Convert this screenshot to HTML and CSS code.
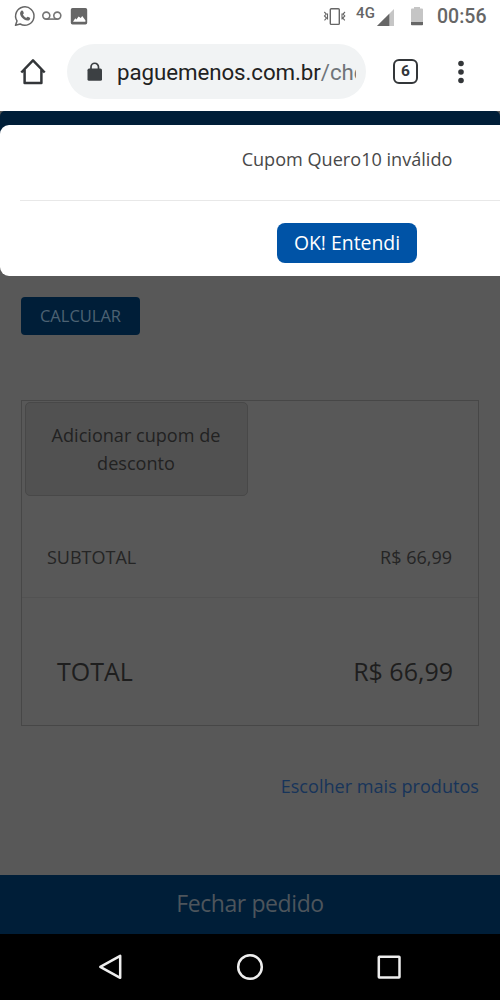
FILE: index.html
```html
<!DOCTYPE html>
<html lang="pt-BR">
<head>
<meta charset="utf-8">
<title>Pague Menos - Carrinho</title>
<link rel="stylesheet" href="styles.css">
</head>
<body>
<div class="phone">
  <header class="status">
    <svg class="status-left" width="90" height="32" viewBox="0 0 90 32">
      <path d="M15.5 25.3 17 20.9A9.2 9.2 0 1 1 20.2 24Z" fill="none" stroke="#666" stroke-width="1.5" stroke-linejoin="round"/>
      <path d="M21.3 10.8c.7-.6 1.3-.5 1.7.3l.8 1.9c.2.5-.7 1.2-.9 1.6.7 1.6 1.9 2.6 3.4 3.3.5-.2 1-1.3 1.5-1.1l2.1 1c.6.3.2 1.5-.4 2.1-1.4 1.2-3.5.7-5.3-.5-2.1-1.4-3.8-3.5-4.1-5.5-.1-1.2.3-2.3 1.200-3.100Z" fill="#666"/>
      <g fill="none" stroke="#757575" stroke-width="1.6"><circle cx="46.300" cy="15.600" r="3.500"/><circle cx="57.300" cy="15.600" r="3.500"/><path d="M46.300 19.100h11"/></g>
      <path fill-rule="evenodd" d="M72.500 8h13a1.700 1.700 0 0 1 1.700 1.700v13a1.700 1.700 0 0 1-1.700 1.700h-13a1.700 1.700 0 0 1-1.700-1.700v-13A1.700 1.700 0 0 1 72.500 8ZM73 21.800h12.400v-1.600l-3.200-4.200-1.400 2.100-2.200-1.700-2.200 3.100-1.100-1.200Z" fill="#666"/>
    </svg>
    <div class="status-right">
      <svg class="vibrate" width="24" height="20" viewBox="0 0 24 20"><g fill="none" stroke="#666"><rect x="7.300" y="1.800" width="9" height="15.600" rx="1" stroke-width="1.400"/><path d="M1.300 5 3.300 7 1.500 9l2 2-2 2.300M4.500 6.500v6M22 5l-2 2 1.800 2-2 2 2 2.300M19 6.500v6" stroke-width="1.100"/></g></svg>
      <span class="network">4G</span>
      <svg class="signal" width="18" height="18" viewBox="0 0 18 18"><path d="M17 0V17H0Z" fill="#c6c6c6"/><path d="M12.300 4.700V17H0Z" fill="#666"/></svg>
      <svg class="battery" width="12" height="20" viewBox="0 0 12 20"><path d="M3 0h6v1.500H11q1 0 1 1v12.500H0V2.500q0-1 1-1h2Z" fill="#c5c5c5"/><path d="M0 15h12v2.500q0 .8-.8.8H.8q-.8 0-.8-.8Z" fill="#666"/></svg>
      <span class="clock">00:56</span>
    </div>
  </header>
  <nav class="browser">
    <svg class="home" width="26" height="28" viewBox="0 0 26 28"><path d="M1.300 14.500 13 2.400l11.700 12.100M4.600 11.600V25H21.400V11.600" fill="none" stroke="#333639" stroke-width="2.500" stroke-linejoin="round"/></svg>
    <div class="address">
      <svg class="lock" width="16" height="20" viewBox="0 0 16 20"><rect x=".5" y="6.600" width="14.500" height="12.200" rx="1.600" fill="#3c4043"/><path d="M4 7V5a3.750 3.750 0 0 1 7.500 0v2" fill="none" stroke="#3c4043" stroke-width="1.700"/></svg>
      <span class="url">paguemenos.com.br<span class="path">/che</span></span>
    </div>
    <span class="tabs">6</span>
    <svg class="more" width="8" height="24" viewBox="0 0 8 24"><g fill="#333639"><circle cx="4" cy="3.500" r="2.800"/><circle cx="4" cy="12" r="2.800"/><circle cx="4" cy="20.500" r="2.800"/></g></svg>
  </nav>
  <main class="page">
    <div class="site-bar"></div>
    <div class="content">
      <button class="calc">CALCULAR</button>
      <section class="summary">
        <button class="coupon">Adicionar cupom de desconto</button>
        <div class="row subtotal"><span class="sub-label">SUBTOTAL</span><span class="sub-value">R$ 66,99</span></div>
        <div class="row total"><span class="total-label">TOTAL</span><span class="total-value">R$ 66,99</span></div>
      </section>
      <div class="more-row"><a class="more-link">Escolher mais produtos</a></div>
    </div>
    <button class="checkout"><span class="checkout-text">Fechar pedido</span></button>
    <div class="modal">
      <p class="message"><span class="message-text">Cupom Quero10 inválido</span></p>
      <div class="actions"><button class="ok">OK! Entendi</button></div>
    </div>
  </main>
  <footer class="system">
    <svg width="26" height="28" viewBox="0 0 26 28"><path d="M22.200 2.800v22L2.300 13.800Z" fill="none" stroke="#eee" stroke-width="2.500" stroke-linejoin="round"/></svg>
    <svg width="28" height="28" viewBox="0 0 28 28"><circle cx="14" cy="14" r="11.800" fill="none" stroke="#eee" stroke-width="2.500"/></svg>
    <svg width="26" height="26" viewBox="0 0 26 26"><rect x="2.800" y="2.800" width="20.700" height="20.700" rx=".5" fill="none" stroke="#eee" stroke-width="2.500"/></svg>
  </footer>
</div>
</body>
</html>
```
FILE: styles.css
```css
* { box-sizing: border-box; }
body { margin: 0; font-family: "Open Sans", "Noto Sans", sans-serif; }
button { border: 0; padding: 0; font-family: inherit; }
svg { display: block; flex: none; }
span, a { white-space: nowrap; }
.phone { width: 500px; height: 1000px; overflow: hidden; display: flex; flex-direction: column; background: #fff; }
.status { height: 32px; display: flex; justify-content: space-between; font-family: Roboto, sans-serif; color: #666; }
.status-right { display: flex; padding-right: 13px; }
.vibrate { margin-top: 7px; }
.network { font-size: 15px; line-height: 17px; font-weight: 500; margin: 5px 0 0 9px; width: 20px; letter-spacing: .2px; }
.signal { margin: 9px 0 0 1px; }
.battery { margin: 7px 0 0 16px; }
.clock { font-size: 19.5px; line-height: 24px; font-weight: 500; margin: 5px 0 0 14px; width: 50px; }
.browser { height: 79px; display: flex; align-items: center; font-family: Roboto, sans-serif; }
.home { margin-left: 20px; }
.address { width: 299px; height: 55px; margin-left: 21px; border-radius: 28px; background: #f1f3f4; display: flex; align-items: center; padding-left: 20px; }
.url { margin-left: 14px; width: 239px; overflow: hidden; font-size: 22.3px; letter-spacing: -.07px; line-height: 32px; color: #222; }
.path { color: #70757a; }
.tabs { width: 25px; height: 25px; margin-left: 27px; border: 2.5px solid #333639; border-radius: 6px; font-size: 15.5px; line-height: 21px; font-weight: 700; text-align: center; color: #333639; }
.more { margin-left: 39px; }
.page { position: relative; overflow: hidden; height: 823px; display: flex; flex-direction: column; background: #585858; }
.site-bar { height: 30px; background: #001e38; border-radius: 5px 5px 0 0; }
.content { height: 734px; padding: 156px 21px 0; }
.calc { display: block; width: 119px; height: 38px; border-radius: 4px; background: #001e38; color: #4d6273; font-size: 16.5px; line-height: 38px; }
.summary { width: 458px; height: 326px; margin-top: 65px; border: 1px solid #474747; padding: 1px 0 0 3px; }
.coupon { display: block; width: 223px; height: 94px; border: 1px solid #484848; border-radius: 5px; background: #515151; color: #222; font-size: 18.1px; line-height: 28px; padding: 0 21px 0 20px; }
.row { display: flex; justify-content: space-between; align-items: center; margin-left: -3px; padding-right: 26px; color: #252525; }
.subtotal { height: 102px; padding-left: 25px; padding-top: 20px; border-bottom: 1px solid #525252; font-size: 18px; }
.total { height: 127px; padding: 18px 25px 0 35px; font-size: 25px; color: #1e1e1e; }
.more-row { display: flex; justify-content: flex-end; margin-top: 46px; }
.more-link { font-size: 18.1px; line-height: 28px; color: #17345a; }
.checkout { height: 59px; background: #001e38; color: #4d555c; font-size: 23px; letter-spacing: -.4px; padding-bottom: 4px; }
.modal { position: absolute; left: 0; top: 14px; width: 694px; height: 151px; background: #fff; border-radius: 9px; }
.message { margin: 0 20px; height: 76px; padding-top: 20px; border-bottom: 1px solid #e8e8e8; text-align: center; font-size: 18.1px; line-height: 28px; color: #484848; }
.actions { display: flex; justify-content: center; padding-top: 22px; }
.ok { width: 140px; height: 40px; border-radius: 8px; background: #0053a6; color: #fff; font-size: 19.4px; line-height: 40px; }
.system { height: 66px; background: #000; display: flex; justify-content: center; align-items: center; gap: 112px; }
```
